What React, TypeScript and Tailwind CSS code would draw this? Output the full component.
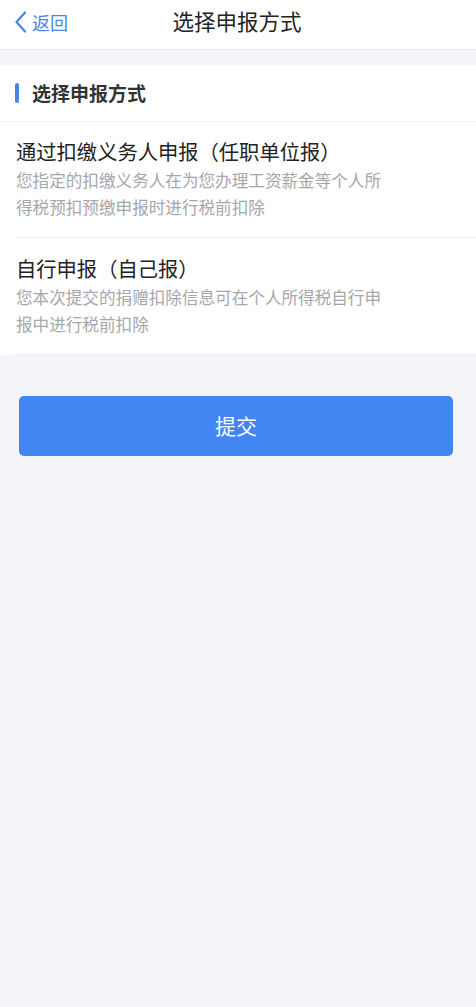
import React from "react";

const font = { fontFamily: '"Noto Sans CJK SC", "Noto Sans", sans-serif' };

export default function App() {
  return (
    <div className="min-h-[1007px] w-full bg-[#f4f5f9]" style={font}>
      <div className="relative flex h-[50px] items-center justify-center border-b border-[#e6e7eb] bg-white">
        <div className="absolute left-[14px] top-0 flex h-[43px] items-center text-[#4a84e4]">
          <svg width="14" height="24" viewBox="0 0 14 24" fill="none">
            <path d="M11 2.5 L2.5 12 L11 21.5" stroke="#4a84e4" strokeWidth="2.2" strokeLinecap="round" strokeLinejoin="round" />
          </svg>
          <span className="ml-[4px] text-[18px] leading-none">返回</span>
        </div>
        <div className="-ml-[2px] -mt-[8px] text-[21.5px] text-[#222] leading-none">选择申报方式</div>
      </div>
      <div className="h-[15px]" />
      <div className="bg-white">
        <div className="flex h-[57px] items-center border-b border-[#eeeff2] pl-[15px]">
          <div className="h-[20px] w-[4px] rounded-full bg-[#4a84e4]" />
          <span className="-mt-[2px] ml-[13px] text-[19px] font-bold text-[#333] leading-none">选择申报方式</span>
        </div>
        <div className="ml-[15px] border-b border-[#eeeff2] pb-[16px] pt-[14px]">
          <div className="pl-[1px] text-[20.3px] leading-[30px] text-[#222]">通过扣缴义务人申报（任职单位报）</div>
          <div className="mt-[1px] w-[380px] pl-[1px] text-[16.6px] leading-[27px] text-[#a6a6ab]">
            您指定的扣缴义务人在为您办理工资薪金等个人所得税预扣预缴申报时进行税前扣除
          </div>
        </div>
        <div className="ml-[15px] border-b border-[#eeeff2] pb-[16px] pt-[15px]">
          <div className="pl-[1px] text-[20.3px] leading-[30px] text-[#222]">自行申报（自己报）</div>
          <div className="mt-[1px] w-[380px] pl-[1px] text-[16.6px] leading-[27px] text-[#a6a6ab]">
            您本次提交的捐赠扣除信息可在个人所得税自行申报中进行税前扣除
          </div>
        </div>
      </div>
      <div className="pl-[19px] pr-[23px] pt-[41px]">
        <button className="flex h-[60px] w-full items-center justify-center rounded-[5px] bg-[#4286f3] text-[21px] text-white">
          提交
        </button>
      </div>
    </div>
  );
}
